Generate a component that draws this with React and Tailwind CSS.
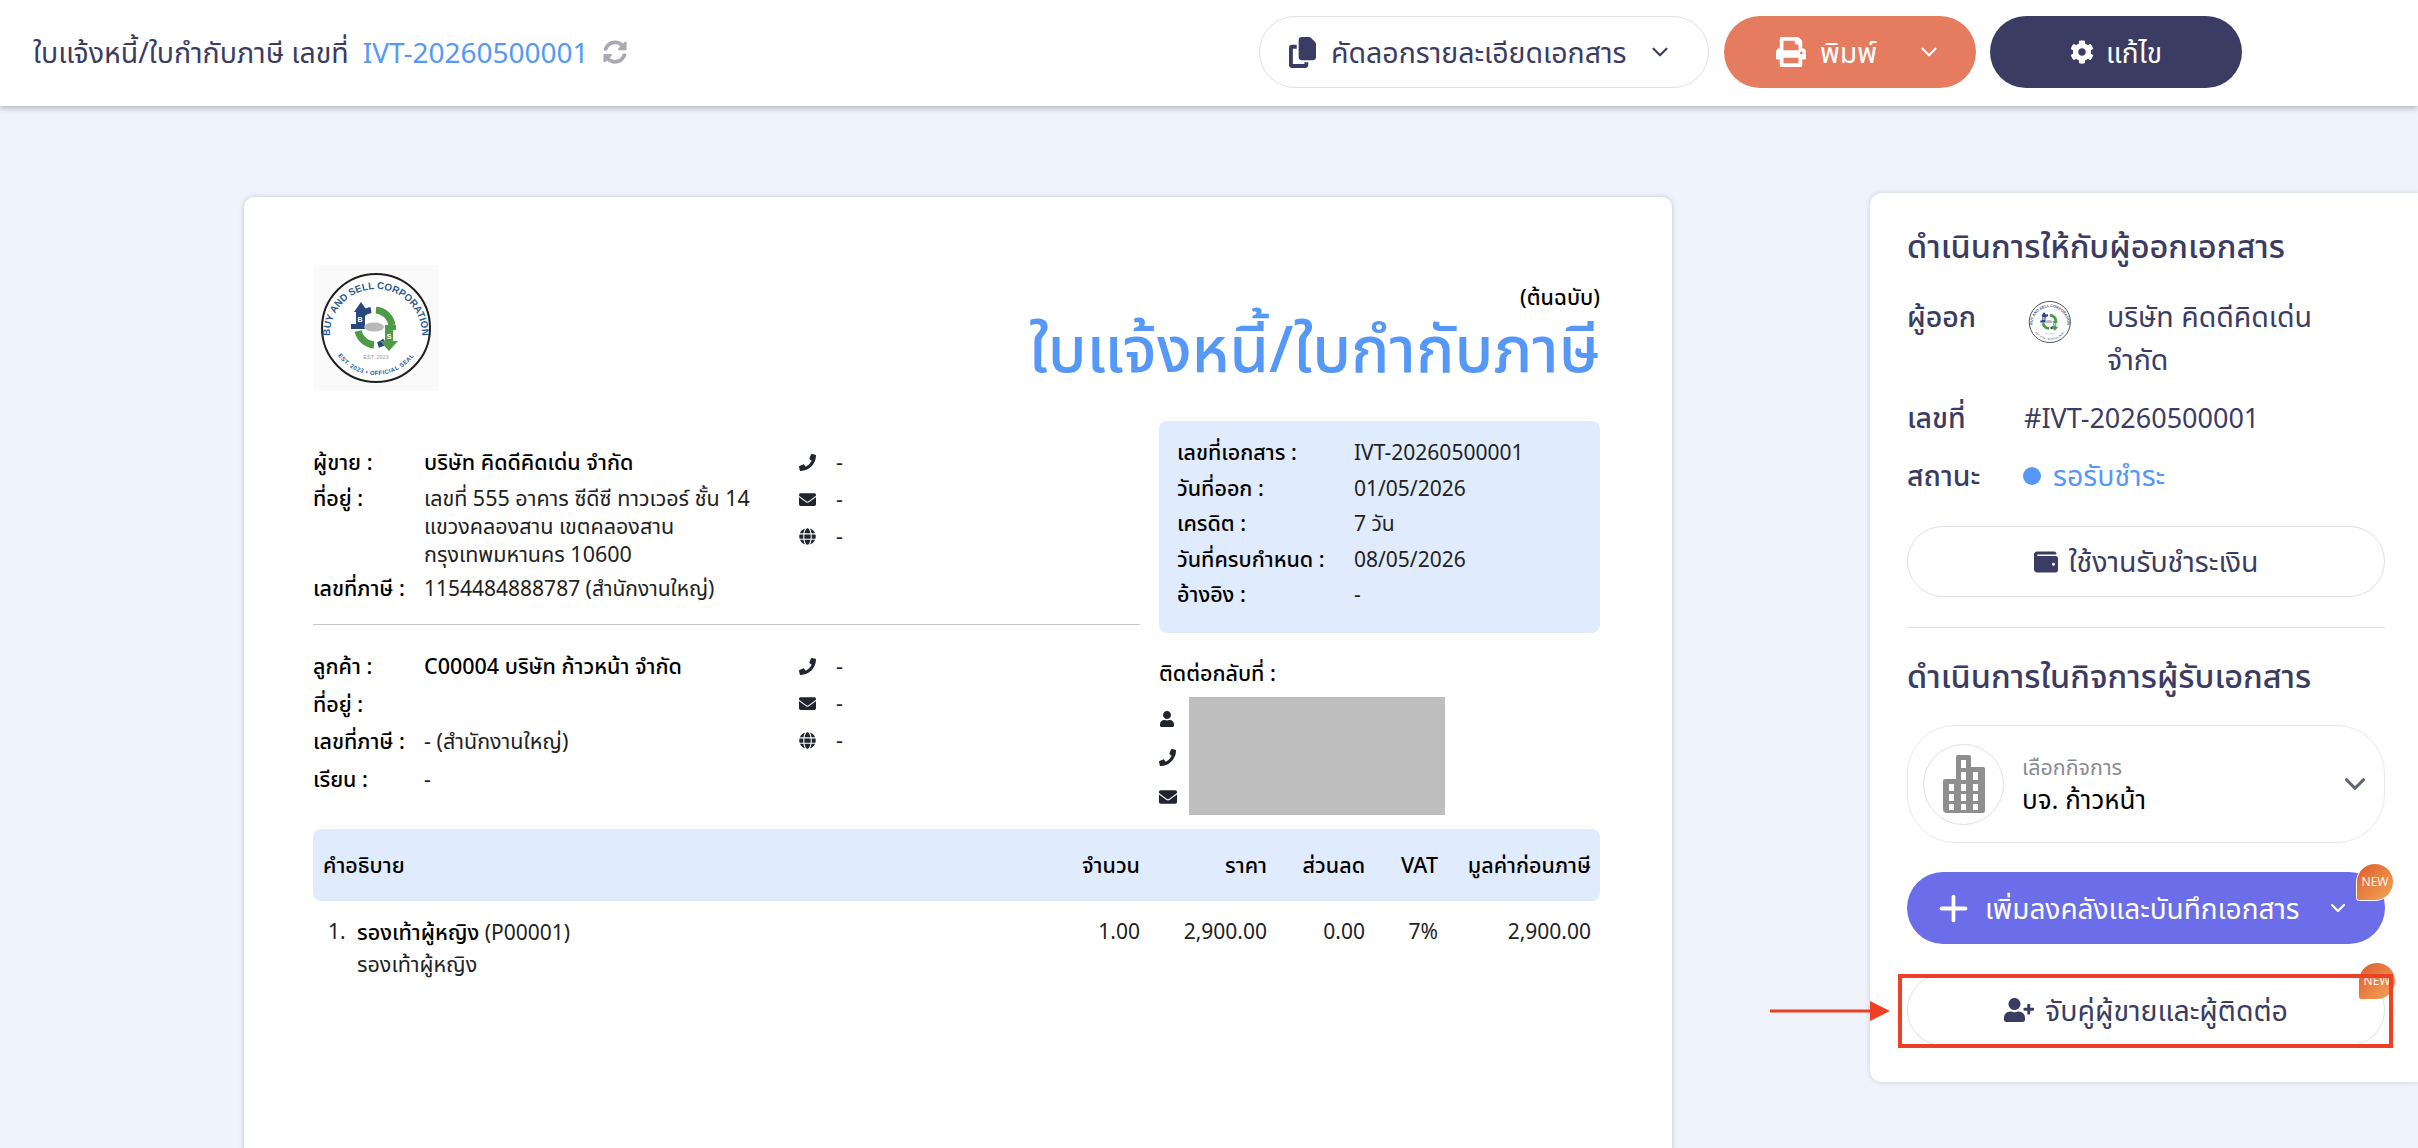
import { ChevronDown, Plus } from 'lucide-react';
import { FaCog, FaEnvelope, FaGlobe, FaPhone, FaPrint, FaSyncAlt, FaUser, FaUserPlus, FaWallet } from 'react-icons/fa';
import { FaCopy } from 'react-icons/fa6';

function SealLogo({ className }) {
  return (
    <svg viewBox="0 0 125 126" className={className}>
      <defs>
        <path id="sealTop" d="M 16 70 A 46 46 0 1 1 108 70" />
        <path id="sealBottom" d="M 21 86 A 47 47 0 0 0 103 86" />
      </defs>
      <circle cx="62" cy="63" r="54" fill="#ffffff" stroke="#1f1f1f" strokeWidth="2" />
      <text fontSize="10" fontWeight="700" fill="#2f5a94" fontFamily="'Liberation Sans', sans-serif">
        <textPath href="#sealTop" startOffset="50%" textAnchor="middle" textLength="146" lengthAdjust="spacingAndGlyphs">BUY AND SELL CORPORATION</textPath>
      </text>
      <text fontSize="6" fontWeight="700" fill="#2f5a94" fontFamily="'Liberation Sans', sans-serif" letterSpacing="0.4">
        <textPath href="#sealBottom" startOffset="50%" textAnchor="middle" side="right">EST. 2023 • OFFICIAL SEAL</textPath>
      </text>
      <text x="62" y="94" fontSize="5.5" fill="#9a9a9a" textAnchor="middle" fontFamily="'Liberation Sans', sans-serif">EST. 2023</text>
      <path d="M 62 45 A 18 18 0 0 1 78 60" fill="none" stroke="#4f9a46" strokeWidth="7" />
      <path d="M 44 66 A 18 18 0 0 0 60 80" fill="none" stroke="#4f9a46" strokeWidth="7" />
      <path d="M 47 50 A 18 18 0 0 1 57 45" fill="none" stroke="#27477f" strokeWidth="6" />
      <path d="M 64 80 A 18 18 0 0 0 71 76" fill="none" stroke="#27477f" strokeWidth="6" />
      <path d="M 40 47 L 47 37 L 54 47 L 51 47 L 51 64 L 37 64 L 37 59 L 42 59 L 42 47 Z" fill="#27477f" />
      <path d="M 71 60 L 82 60 L 82 65 L 79 65 L 79 76 L 84 76 L 75 86 L 66 76 L 71 76 Z" fill="#4f9a46" />
      <ellipse cx="60" cy="62" rx="10" ry="4.5" fill="#b9b9b9" />
      <text x="46" y="57" fontSize="7" fontWeight="700" fill="#ffffff" textAnchor="middle" fontFamily="'Liberation Sans', sans-serif">B</text>
      <text x="75" y="74" fontSize="7" fontWeight="700" fill="#ffffff" textAnchor="middle" fontFamily="'Liberation Sans', sans-serif">S</text>
    </svg>
  );
}

function BuildingIcon() {
  return (
    <svg viewBox="0 0 42 58" className="w-[42px] h-[58px]" fill="#8f8f8f">
      <path d="M13 2a2 2 0 0 1 2-2h11a2 2 0 0 1 2 2v10h12a2 2 0 0 1 2 2v42a2 2 0 0 1-2 2H4a4 4 0 0 1-4-4V26a2 2 0 0 1 2-2h11z" />
      <g fill="#ffffff">
        <rect x="18" y="5" width="5" height="8" />
        <rect x="18" y="17" width="5" height="8" />
        <rect x="30" y="17" width="5" height="8" />
        <rect x="6" y="29" width="5" height="7" />
        <rect x="18" y="29" width="5" height="7" />
        <rect x="30" y="29" width="5" height="7" />
        <rect x="6" y="39" width="5" height="7" />
        <rect x="18" y="39" width="5" height="7" />
        <rect x="30" y="39" width="5" height="7" />
        <rect x="6" y="49" width="5" height="6" />
        <rect x="18" y="49" width="5" height="6" />
        <rect x="30" y="49" width="5" height="6" />
      </g>
    </svg>
  );
}

function NewBadge({ className }) {
  return (
    <div className={`absolute w-[38px] h-[38px] rounded-[50%_50%_50%_3px] border border-white bg-gradient-to-br from-[#de5a2c] to-[#f1a557] flex items-center justify-center text-[12px] text-white/90 ${className}`}>
      NEW
    </div>
  );
}

function ContactIcons() {
  return (
    <div className="flex flex-col gap-[9px] text-[#21252d]">
      <div className="flex items-center h-[28px]"><FaPhone className="w-[17px] h-[17px] mr-[20px]" />-</div>
      <div className="flex items-center h-[28px]"><FaEnvelope className="w-[17px] h-[17px] mr-[20px]" />-</div>
      <div className="flex items-center h-[28px]"><FaGlobe className="w-[17px] h-[17px] mr-[20px]" />-</div>
    </div>
  );
}

function Label({ children }) {
  return <div className="w-[111px] font-medium text-black">{children}</div>;
}

const docInfo = [
  ['เลขที่เอกสาร :', 'IVT-20260500001'],
  ['วันที่ออก :', '01/05/2026'],
  ['เครดิต :', '7 วัน'],
  ['วันที่ครบกำหนด :', '08/05/2026'],
  ['อ้างอิง :', '-'],
];

export default function App() {
  return (
    <div className="h-[1148px] overflow-hidden bg-[#eff3fc] font-['Noto_Sans','Noto_Sans_Thai',sans-serif] text-[#3b3c63]">
      <header className="relative z-10 h-[106px] bg-white shadow-[0_2px_6px_rgba(0,0,0,0.28)] flex items-center pl-[33px] pb-[2px]">
        <div className="w-[1226px] flex items-center text-[28px]">
          <span className="text-[28.5px]">ใบแจ้งหนี้/ใบกำกับภาษี เลขที่</span>
          <span className="ml-[14px] text-[#5598f8]">IVT-20260500001</span>
          <FaSyncAlt className="ml-[14px] w-[24px] h-[24px] text-[#a9a9b4]" />
        </div>
        <button className="w-[450px] h-[72px] rounded-full border border-[#dfdfe8] flex items-center pl-[29px] text-[28.5px]">
          <FaCopy className="w-[27px] h-[33px] mr-[15px]" />
          คัดลอกรายละเอียดเอกสาร
          <ChevronDown className="ml-[21px] w-[26px] h-[26px]" strokeWidth={2} />
        </button>
        <button className="ml-[15px] w-[252px] h-[72px] rounded-full bg-[#e57b5f] text-white flex items-center pl-[52px] text-[28.5px]">
          <FaPrint className="w-[30px] h-[30px] mr-[14px]" />
          พิมพ์
          <ChevronDown className="ml-[39px] w-[26px] h-[26px]" strokeWidth={2} />
        </button>
        <button className="ml-[14px] w-[252px] h-[72px] rounded-full bg-[#3b3c63] text-white flex items-center justify-center text-[28px]">
          <FaCog className="w-[24px] h-[24px] mr-[12px]" />
          แก้ไข
        </button>
      </header>

      <main className="flex items-start pl-[244px] pt-[87px]">
        <section className="mt-[4px] w-[1428px] h-[1000px] shrink-0 rounded-[10px] bg-white shadow-[0_0_5px_rgba(60,60,100,0.25)] pl-[69px] pr-[72px] pt-[68px] text-[21.5px] text-[#222]">
          <div className="flex justify-between">
            <div className="ml-[1px] w-[125px] h-[126px] bg-[#fafafa]">
              <SealLogo className="w-[125px] h-[126px]" />
            </div>
            <div className="text-right">
              <div className="mt-[18px] text-[21.5px] leading-[28px] font-medium text-black">(ต้นฉบับ)</div>
              <div className="mt-[1px] text-[63.5px] leading-[72px] font-medium text-[#5598f8]">ใบแจ้งหนี้/ใบกำกับภาษี</div>
            </div>
          </div>

          <div className="mt-[30px] flex gap-[19px]">
            <div className="w-[827px] pt-[27px] leading-[28px]">
              <div className="flex">
                <div className="w-[486px]">
                  <div className="flex">
                    <Label>ผู้ขาย :</Label>
                    <div className="font-medium text-black">บริษัท คิดดีคิดเด่น จำกัด</div>
                  </div>
                  <div className="mt-[8px] flex">
                    <Label>ที่อยู่ :</Label>
                    <div className="w-[375px]">
                      เลขที่ 555 อาคาร ซีดีซี ทาวเวอร์ ชั้น 14<br />
                      แขวงคลองสาน เขตคลองสาน<br />
                      กรุงเทพมหานคร 10600
                    </div>
                  </div>
                  <div className="mt-[6px] flex">
                    <Label>เลขที่ภาษี :</Label>
                    <div className="text-[21px]">1154484888787 (สำนักงานใหญ่)</div>
                  </div>
                </div>
                <ContactIcons />
              </div>
              <div className="mt-[22px] h-px bg-[#c4c4c4]" />
              <div className="mt-[27px] flex">
                <div className="w-[486px] flex flex-col gap-[9.5px]">
                  <div className="flex">
                    <Label>ลูกค้า :</Label>
                    <div className="font-medium text-black">C00004 บริษัท ก้าวหน้า จำกัด</div>
                  </div>
                  <div className="flex">
                    <Label>ที่อยู่ :</Label>
                  </div>
                  <div className="flex">
                    <Label>เลขที่ภาษี :</Label>
                    <div>- (สำนักงานใหญ่)</div>
                  </div>
                  <div className="flex">
                    <Label>เรียน :</Label>
                    <div>-</div>
                  </div>
                </div>
                <ContactIcons />
              </div>
            </div>

            <div className="w-[441px]">
              <div className="h-[212px] rounded-[8px] bg-[#e0ecfd] pl-[18px] pt-[17px] flex flex-col gap-[7.5px] leading-[28px]">
                {docInfo.map(([label, value]) => (
                  <div key={label} className="flex">
                    <div className="w-[177px] font-medium text-black">{label}</div>
                    <div className="text-[21px]">{value}</div>
                  </div>
                ))}
              </div>
              <div className="mt-[26px] leading-[28px] font-medium text-black">ติดต่อกลับที่ :</div>
              <div className="mt-[10px] flex">
                <div className="w-[30px] pt-[14px] flex flex-col gap-[22px] text-[#21252d]">
                  <FaUser className="w-[16px] h-[16px]" />
                  <FaPhone className="w-[17px] h-[17px]" />
                  <FaEnvelope className="w-[18px] h-[18px]" />
                </div>
                <div className="w-[256px] h-[118px] bg-[#bebebe]" />
              </div>
            </div>
          </div>

          <div className="mt-[14px]">
            <div className="h-[72px] rounded-[8px] bg-[#e0ecfd] pl-[10px] pr-[9px] grid grid-cols-[minmax(0,1fr)_127px_98px_73px_153px] items-center font-medium text-black">
              <div className="flex justify-between"><span>คำอธิบาย</span><span>จำนวน</span></div>
              <div className="text-right">ราคา</div>
              <div className="text-right">ส่วนลด</div>
              <div className="text-right">VAT</div>
              <div className="text-right">มูลค่าก่อนภาษี</div>
            </div>
            <div className="pt-[15px] pl-[10px] pr-[9px] grid grid-cols-[minmax(0,1fr)_127px_98px_73px_153px] leading-[31px] text-[21px]">
              <div className="flex justify-between">
                <div className="flex pl-[5px]">
                  <div className="w-[29px]">1.</div>
                  <div>
                    <div><span className="text-[21.5px] font-medium text-black">รองเท้าผู้หญิง</span> (P00001)</div>
                    <div className="text-[21.5px]">รองเท้าผู้หญิง</div>
                  </div>
                </div>
                <span>1.00</span>
              </div>
              <div className="text-right">2,900.00</div>
              <div className="text-right">0.00</div>
              <div className="text-right">7%</div>
              <div className="text-right">2,900.00</div>
            </div>
          </div>
        </section>

        <aside className="ml-[198px] w-[548px] h-[889px] shrink-0 rounded-l-[12px] bg-white shadow-[0_0_5px_rgba(60,60,100,0.2)] pl-[37px] pr-[33px] pt-[33px] text-[28.5px]">
          <h2 className="text-[32.5px] leading-[40px] font-medium">ดำเนินการให้กับผู้ออกเอกสาร</h2>
          <div className="mt-[29px] flex leading-[43px]">
            <div className="w-[119px] font-medium">ผู้ออก</div>
            <SealLogo className="mt-[3px] w-[48px] h-[48px]" />
            <div className="ml-[33px] w-[270px]">บริษัท คิดดีคิดเด่น<br />จำกัด</div>
          </div>
          <div className="mt-[15px] flex leading-[43px]">
            <div className="w-[117px] font-medium">เลขที่</div>
            <div className="text-[27px]">#IVT-20260500001</div>
          </div>
          <div className="mt-[15px] flex items-center leading-[43px]">
            <div className="w-[116px] font-medium">สถานะ</div>
            <span className="w-[18px] h-[18px] rounded-full bg-[#5598f8]" />
            <span className="ml-[12px] text-[#5598f8]">รอรับชำระ</span>
          </div>
          <button className="mt-[29px] w-full h-[71px] rounded-full border border-[#dfdfe8] flex items-center justify-center">
            <FaWallet className="w-[24px] h-[24px] mr-[11px]" />
            ใช้งานรับชำระเงิน
          </button>
          <div className="mt-[30px] h-px bg-[#dfdfe8]" />

          <h2 className="mt-[28px] text-[32.5px] leading-[40px] font-medium">ดำเนินการในกิจการผู้รับเอกสาร</h2>
          <div className="mt-[29px] h-[118px] rounded-[48px] border border-[#e8e8ee] flex items-center pl-[15px]">
            <div className="w-[81px] h-[81px] rounded-full border border-[#dfdfe8] flex items-center justify-center">
              <BuildingIcon />
            </div>
            <div className="ml-[18px] flex-1">
              <div className="text-[21.5px] leading-[30px] text-[#8b8b93]">เลือกกิจการ</div>
              <div className="text-[26px] leading-[34px] text-black">บจ. ก้าวหน้า</div>
            </div>
            <ChevronDown className="mr-[12px] w-[34px] h-[34px] text-[#5f6570]" strokeWidth={2.2} />
          </div>

          <div className="relative mt-[29px]">
            <button className="w-full h-[72px] rounded-full bg-[#6b6de9] text-white flex items-center pl-[26px] text-[28px]">
              <Plus className="w-[41px] h-[41px] mr-[11px]" strokeWidth={2.2} />
              เพิ่มลงคลังและบันทึกเอกสาร
              <ChevronDown className="ml-[26px] w-[24px] h-[24px]" strokeWidth={2.2} />
            </button>
            <NewBadge className="-top-[9px] -right-[9px]" />
          </div>

          <div className="relative mt-[30px]">
            <button className="w-full h-[72px] rounded-full border border-[#dfdfe8] flex items-center justify-center">
              <FaUserPlus className="w-[30px] h-[24px] mr-[11px]" />
              จับคู่ผู้ขายและผู้ติดต่อ
            </button>
            <NewBadge className="-top-[12px] -right-[11px]" />
            <div className="absolute -left-[9px] -right-[8px] top-0 -bottom-[2px] border-4 border-[#ee4024]" />
            <svg viewBox="0 0 120 20" className="absolute -left-[137px] top-[27px] w-[120px] h-[20px]">
              <rect x="0" y="8.5" width="102" height="3" fill="#ee4024" />
              <polygon points="100,0 120,10 100,20" fill="#ee4024" />
            </svg>
          </div>
        </aside>
      </main>
    </div>
  );
}
